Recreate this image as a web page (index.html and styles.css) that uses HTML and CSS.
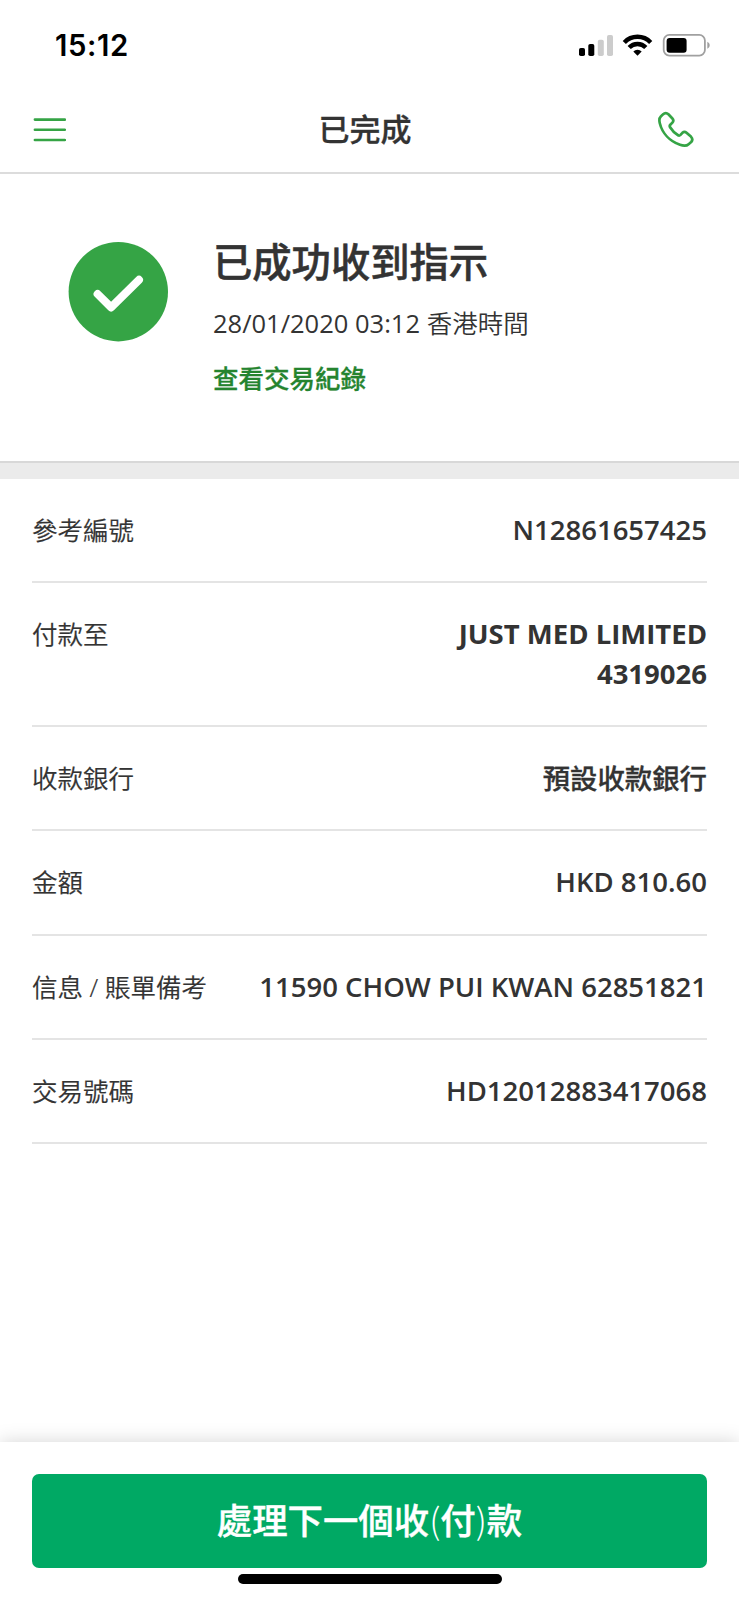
FILE: index.html
```html
<!DOCTYPE html>
<html lang="zh-Hant">
<head>
<meta charset="utf-8">
<meta name="viewport" content="width=device-width">
<title>已完成</title>
<link rel="stylesheet" href="styles.css">
</head>
<body>
<div class="screen">
  <div class="status">
    <span class="time">15:12</span>
    <svg class="status-icons" width="136" height="28" viewBox="0 0 136 28">
      <rect x="1" y="15" width="6" height="8" rx="1.8"/>
      <rect x="10.3" y="11" width="6" height="12" rx="1.8"/>
      <rect x="19.8" y="6.8" width="6" height="16.2" rx="1.8" fill="#ccc"/>
      <rect x="29" y="2" width="6" height="21" rx="1.8" fill="#ccc"/>
      <g fill="none" stroke="#000" stroke-width="4.4">
        <path d="M46.3 9.4a18.2 18.2 0 0 1 26.4 0"/>
        <path d="M51.2 14.6a11.4 11.4 0 0 1 16.6 0"/>
      </g>
      <path d="M59.5 22.8l-4.2-4.4a6 6 0 0 1 8.4 0z"/>
      <rect x="85.7" y="1.9" width="41.2" height="20.7" rx="5.6" fill="#fff" stroke="#a0a0a0" stroke-width="1.8"/>
      <rect x="88.6" y="4.9" width="20" height="14.8" rx="3"/>
      <path d="M129.3 8.8c3.2 1.5 3.2 5.5 0 7z" fill="#a0a0a0"/>
    </svg>
  </div>
  <header class="nav">
    <svg class="menu" width="34" height="26" viewBox="0 0 34 26" stroke="#35a445" stroke-width="2.6" stroke-linecap="round">
      <path d="M2.9 2.6h30M2.9 12.8h30M2.9 23h30"/>
    </svg>
    <h1 class="title">已完成</h1>
    <svg class="phone" width="40" height="40" viewBox="0 0 40 40" fill="none" stroke="#35a445" stroke-width="2.7" stroke-linejoin="round">
      <path d="M6.8 4.6C8.7 2.8 10.8 2.8 12.4 4.3L16.4 8.5C17.7 9.9 17.7 11.1 16.4 12.6L14.3 14.7C13.5 15.5 13.5 16.2 14.1 17.2C16.2 20.6 18.9 23.5 22.1 25.3C23 25.8 23.8 25.6 24.5 24.9L26.4 22.8C27.9 21.4 29.2 21.5 30.5 22.7L34.9 26.6C36.7 28.5 36.8 30.2 35.2 32L32.6 34.2C30.5 36.2 27.6 36.1 24 34.8C13.8 31.1 6.2 23 3.8 13.2C2.9 9.6 3.1 8 4.8 6.4Z"/>
    </svg>
  </header>
  <section class="summary">
    <svg class="done" width="100" height="100" viewBox="0 0 100 100">
      <circle cx="50.3" cy="49.7" r="49.7" fill="#35a445"/>
      <path d="M29.6 52L43.1 65.4L71 37.8" fill="none" stroke="#fff" stroke-width="8" stroke-linecap="round" stroke-linejoin="round"/>
    </svg>
    <div class="summary-text">
      <h2 class="headline">已成功收到指示</h2>
      <p class="date">28/01/2020 03:12 <span class="zone">香港時間</span></p>
      <a class="history">查看交易紀錄</a>
    </div>
  </section>
  <dl class="details">
    <div class="row"><dt>參考編號</dt><dd>N12861657425</dd></div>
    <div class="row"><dt>付款至</dt><dd class="payee">JUST MED LIMITED<br>4319026</dd></div>
    <div class="row"><dt>收款銀行</dt><dd class="bank">預設收款銀行</dd></div>
    <div class="row"><dt>金額</dt><dd>HKD 810.60</dd></div>
    <div class="row"><dt>信息 / 賬單備考</dt><dd>11590 CHOW PUI KWAN 62851821</dd></div>
    <div class="row"><dt>交易號碼</dt><dd>HD12012883417068</dd></div>
  </dl>
  <footer class="footer">
    <button class="next">處理下一個收<span class="paren">(</span>付<span class="paren">)</span>款</button>
    <div class="home"></div>
  </footer>
</div>
</body>
</html>
```
FILE: styles.css
```css
* { box-sizing: border-box; }
body {
  margin: 0;
  background: #fff;
  color: #333;
  font-family: "Open Sans", "Noto Sans CJK TC", sans-serif;
}
h1, h2, p, dl, dd, dt { margin: 0; }
.screen {
  width: 739px;
  height: 1600px;
  display: flex;
  flex-direction: column;
  overflow: hidden;
}
.status {
  height: 92px;
  flex: none;
  display: flex;
  justify-content: space-between;
  padding: 33px 25px 0 55px;
}
.time {
  font: 600 29.3px/25px Inter, sans-serif;
  letter-spacing: .6px;
  color: #000;
}
.status-icons { flex: none; }
.nav {
  height: 81.5px;
  flex: none;
  display: flex;
  align-items: center;
  justify-content: space-between;
  padding: 0 43px 4px 32px;
  border-bottom: 2px solid #dcdcdc;
}
.title {
  font-size: 31px;
  line-height: 40px;
  font-weight: 500;
  font-family: "Noto Sans CJK TC", sans-serif;
  -webkit-text-stroke: .3px currentColor;
  margin: -3px 0 0 8px;
}
.summary {
  height: 287.5px;
  flex: none;
  display: flex;
  align-items: flex-start;
  gap: 45px;
  padding: 68.5px 0 0 68px;
}
.done { flex: none; }
.headline {
  font: 500 39.3px/44px "Noto Sans CJK TC", sans-serif;
  -webkit-text-stroke: .5px currentColor;
  margin-top: -4px;
}
.date {
  font-size: 25.5px;
  line-height: 36px;
  margin-top: 22.5px;
}
.zone { font-weight: 350; }
.history {
  display: block;
  margin-top: 17px;
  font: 500 25.5px/38px "Noto Sans CJK TC", sans-serif;
  -webkit-text-stroke: .3px currentColor;
  color: #25842f;
}
.details {
  flex: 1;
  border-top: 2px solid #d8d8d8;
  padding: 0 32px;
}
.details::before {
  content: "";
  display: block;
  height: 16px;
  margin: 0 -32px;
  background: #ebebeb;
}
.row {
  display: flex;
  justify-content: space-between;
  padding: 32px 0 31.3px;
  border-bottom: 2px solid #e4e4e4;
}
dt {
  font-size: 25.5px;
  line-height: 39px;
  font-weight: 350;
  -webkit-text-stroke: .2px currentColor;
}
dd {
  font-size: 27.5px;
  line-height: 39px;
  font-weight: 600;
  text-align: right;
  margin: -1px 0 1px;
}
.payee {
  font-weight: 700;
  line-height: 39.3px;
}
.bank {
  font-size: 27.4px;
  font-weight: 500;
  -webkit-text-stroke: .3px currentColor;
  margin: 0;
}
.footer {
  height: 158px;
  flex: none;
  padding: 32px 32px 0;
  box-shadow: 0 0 18px rgba(0, 0, 0, .17);
  background: #fff;
}
.next {
  display: block;
  width: 100%;
  height: 94px;
  padding: 0 0 5px;
  border: 0;
  border-radius: 7px;
  background: #00a964;
  color: #fff;
  font: 500 35.4px/89px "Noto Sans CJK TC", sans-serif;
  -webkit-text-stroke: .4px currentColor;
}
.paren {
  font-weight: 300;
  -webkit-text-stroke: 0;
}
.home {
  width: 264px;
  height: 10px;
  margin: 6px auto 0;
  border-radius: 5px;
  background: #000;
}
```
